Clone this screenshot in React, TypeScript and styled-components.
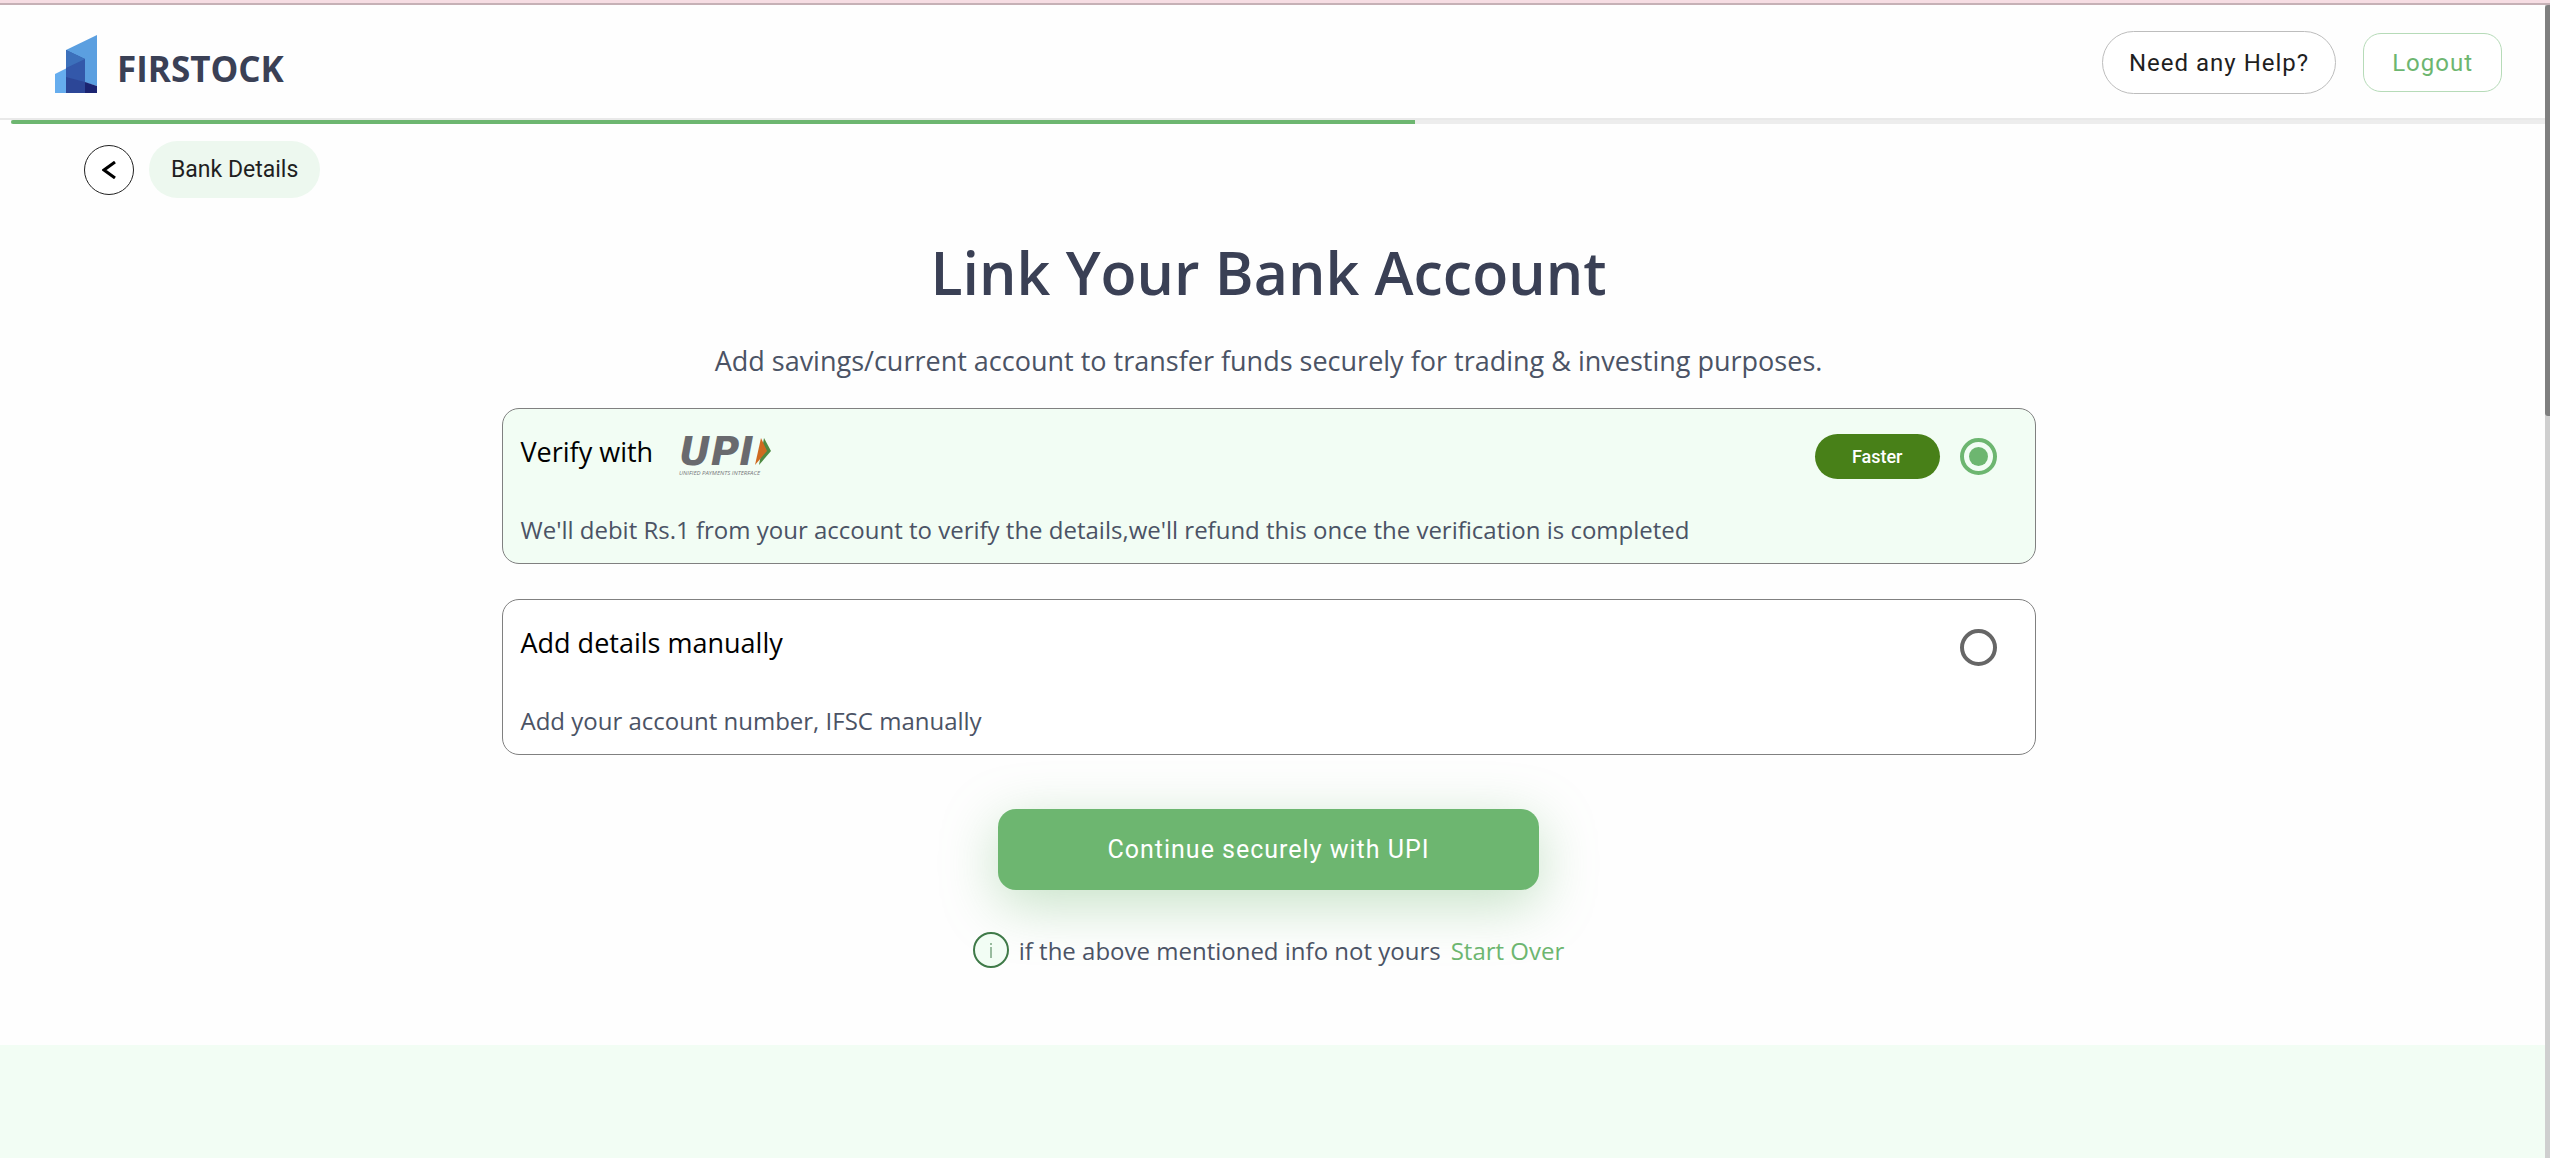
import React, { useState } from "react";
import styled, { createGlobalStyle } from "styled-components";

const GlobalStyle = createGlobalStyle`
  *, *::before, *::after { box-sizing: border-box; }
  body {
    margin: 0;
    background: #fefefe;
    color: #4b5365;
    font-family: "Open Sans", "Noto Sans", sans-serif;
  }
  h1, p { margin: 0; }
  button, input { font: inherit; margin: 0; }
`;

const Page = styled.div`
  display: flex;
  flex-direction: column;
  min-height: 100vh;
`;

const WindowEdge = styled.div`
  height: 5px;
  background: #f6dde3;
  border-bottom: 2px solid #c6b1b6;
`;

const Viewport = styled.div`
  display: flex;
  flex: 1;
`;

const Content = styled.div`
  display: flex;
  flex: 1;
  flex-direction: column;
`;

const ScrollTrack = styled.div`
  width: 5px;
  background: #cfcfcf;
`;

const ScrollThumb = styled.div`
  height: 411px;
  border-radius: 3px 0 0 3px;
  background: #7f7f7f;
`;

const Header = styled.header`
  display: flex;
  align-items: flex-start;
  justify-content: space-between;
  height: 115px;
  padding: 26px 43px 0 55px;
  border-bottom: 2px solid #e9e9e9;
`;

const Brand = styled.div`
  display: flex;
  align-items: flex-start;
  gap: 19px;
  padding-top: 4px;
`;

const BrandName = styled.span`
  padding-top: 5px;
  color: #3a4055;
  font-size: 35px;
  font-weight: 700;
  line-height: 58px;
`;

const HeaderActions = styled.div`
  display: flex;
  align-items: center;
  gap: 27px;
`;

const OutlineButton = styled.button<{ $accent?: boolean }>`
  height: ${(p) => (p.$accent ? "59px" : "63px")};
  padding: ${(p) => (p.$accent ? "0 28px" : "0 26px")};
  border: 1px solid ${(p) => (p.$accent ? "#b6dbb8" : "#bdbdbd")};
  border-radius: ${(p) => (p.$accent ? "18px" : "32px")};
  background: #fff;
  color: ${(p) => (p.$accent ? "#6db670" : "#1f1f1f")};
  font-family: Roboto, sans-serif;
  font-size: 24px;
  letter-spacing: 1px;
  cursor: pointer;
`;

const ProgressTrack = styled.div`
  height: 4px;
  margin-left: 11px;
  background: #ededed;
`;

const ProgressFill = styled.div`
  height: 100%;
  border-radius: 2px 0 0 2px;
  background: #6db670;
`;

const Breadcrumb = styled.nav`
  display: flex;
  align-items: center;
  gap: 15px;
  padding: 17px 84px 0;
`;

const BackButton = styled.button`
  display: grid;
  place-items: center;
  width: 50px;
  height: 50px;
  padding: 0;
  border: 1px solid #222;
  border-radius: 50%;
  background: #fff;
  cursor: pointer;
`;

const Crumb = styled.span`
  padding: 0 22px;
  border-radius: 29px;
  background: #edf8ef;
  color: #1f1f1f;
  font-family: Roboto, sans-serif;
  font-size: 23px;
  line-height: 57px;
`;

const Main = styled.main`
  display: flex;
  flex-direction: column;
  align-items: center;
  padding: 30px 8px 77px 0;
`;

const Title = styled.h1`
  color: #3a4055;
  font-size: 59px;
  font-weight: 600;
  line-height: 88px;
`;

const Subtitle = styled.p`
  margin-top: 23px;
  font-size: 27px;
  line-height: 44px;
`;

const Options = styled.form`
  display: flex;
  flex-direction: column;
  gap: 35px;
  width: 100%;
  max-width: 1534px;
  margin-top: 25px;
`;

const OptionCard = styled.label<{ $selected: boolean }>`
  display: flex;
  flex-direction: column;
  gap: 34px;
  min-height: 156px;
  padding: 26px 38px 16px 18px;
  border: 1px solid #808080;
  border-radius: 17px;
  background: ${(p) => (p.$selected ? "#f2fdf4" : "#fff")};
  cursor: pointer;
`;

const OptionHead = styled.span`
  display: flex;
  align-items: center;
  height: 42px;
`;

const OptionTitle = styled.span`
  display: flex;
  align-items: center;
  gap: 26px;
  margin-right: auto;
`;

const OptionName = styled.span`
  padding-bottom: 8px;
  color: #000;
  font-size: 27px;
  line-height: 36px;
`;

const OptionText = styled.span`
  padding-top: 2px;
  font-size: 24px;
  line-height: 34px;
`;

const Badge = styled.span`
  margin-right: 20px;
  padding: 0 37px;
  border-radius: 23px;
  background: #488018;
  color: #fff;
  font-family: Roboto, sans-serif;
  font-size: 18px;
  font-weight: 500;
  line-height: 45px;
`;

const Radio = styled.input`
  appearance: none;
  display: grid;
  place-items: center;
  width: 37px;
  height: 37px;
  border: 4px solid #666;
  border-radius: 50%;

  &:checked {
    border-color: #6db670;
  }

  &:checked::before {
    content: "";
    width: 19px;
    height: 19px;
    border-radius: 50%;
    background: #6db670;
  }
`;

const SubmitButton = styled.button`
  width: 541px;
  max-width: 100%;
  height: 81px;
  margin-top: 54px;
  border: 0;
  border-radius: 18px;
  background: #6db670;
  box-shadow: 0 14px 56px rgba(109, 182, 112, 0.4);
  color: #fff;
  font-family: Roboto, sans-serif;
  font-size: 25px;
  letter-spacing: 1px;
  cursor: pointer;
`;

const Note = styled.p`
  display: flex;
  align-items: center;
  gap: 10px;
  height: 36px;
  margin-top: 42px;
  font-size: 24px;
  line-height: 36px;
`;

const NoteText = styled.span`
  padding-top: 2px;
`;

const StartOver = styled.a`
  padding-top: 2px;
  color: #6db670;
  text-decoration: none;
`;

const Band = styled.footer`
  flex: 1;
  background: #f2fdf4;
`;

const LogoSvg = styled.svg`
  display: block;
  overflow: visible;
`;

const FirstockMark = () => (
  <LogoSvg width="43" height="58" viewBox="0 0 43 58" aria-hidden="true">
    <path d="M11 15 42 0V51L11 42Z" fill="#5b9fe0" />
    <path d="M0 39 30 24V58H0Z" fill="#66adee" />
    <path d="M11 15 30 24V58H11Z" fill="#3358aa" />
    <path d="M11 15 30 24 11 33Z" fill="#3c70bb" />
    <path d="M11 42 30 47V58H11Z" fill="#2c4697" />
    <path d="M30 47 42 51V58H30Z" fill="#1b2471" />
  </LogoSvg>
);

const UpiLogo = () => (
  <LogoSvg width="92" height="42" viewBox="0 0 92 42" role="img" aria-label="Unified Payments Interface">
    <text x="0" y="30" fill="#696a6e" fontFamily="DejaVu Sans, sans-serif" fontSize="39" fontWeight="700" fontStyle="italic">
      UPI
    </text>
    <path d="M85 3 92 16 80 30Z" fill="#4f8a42" />
    <path d="M82 3 88 16 76 30Z" fill="#cf6a20" />
    <text x="0" y="40" fill="#77787b" fontFamily="Open Sans, sans-serif" fontSize="6" fontStyle="italic">
      UNIFIED PAYMENTS INTERFACE
    </text>
  </LogoSvg>
);

const BackIcon = () => (
  <svg width="14" height="18" viewBox="0 0 14 18" fill="none" stroke="#000" strokeWidth="3" aria-hidden="true">
    <path d="M13 1 2 9 13 17" />
  </svg>
);

const InfoIcon = () => (
  <svg width="36" height="36" viewBox="0 0 36 36" fill="none" stroke="#3f7a48" aria-hidden="true">
    <circle cx="18" cy="18" r="17" fill="#f2fdf4" strokeWidth="2" />
    <path d="M18 15V26M18 11V13" strokeWidth="1" />
  </svg>
);

type Method = "upi" | "manual";

export default function App() {
  const [method, setMethod] = useState<Method>("upi");
  const progress = 55.4;

  return (
    <>
      <GlobalStyle />
      <Page>
        <WindowEdge />
        <Viewport>
          <Content>
            <Header>
              <Brand>
                <FirstockMark />
                <BrandName>FIRSTOCK</BrandName>
              </Brand>
              <HeaderActions>
                <OutlineButton type="button">Need any Help?</OutlineButton>
                <OutlineButton type="button" $accent>
                  Logout
                </OutlineButton>
              </HeaderActions>
            </Header>
            <ProgressTrack role="progressbar" aria-valuenow={progress} aria-label="Progress">
              <ProgressFill style={{ width: `${progress}%` }} />
            </ProgressTrack>
            <Breadcrumb>
              <BackButton type="button" aria-label="Back">
                <BackIcon />
              </BackButton>
              <Crumb>Bank Details</Crumb>
            </Breadcrumb>
            <Main>
              <Title>Link Your Bank Account</Title>
              <Subtitle>
                Add savings/current account to transfer funds securely for trading &amp; investing purposes.
              </Subtitle>
              <Options id="bank-link">
                <OptionCard $selected={method === "upi"}>
                  <OptionHead>
                    <OptionTitle>
                      <OptionName>Verify with</OptionName>
                      <UpiLogo />
                    </OptionTitle>
                    <Badge>Faster</Badge>
                    <Radio type="radio" name="method" checked={method === "upi"} onChange={() => setMethod("upi")} />
                  </OptionHead>
                  <OptionText>
                    We'll debit Rs.1 from your account to verify the details,we'll refund this once the verification is
                    completed
                  </OptionText>
                </OptionCard>
                <OptionCard $selected={method === "manual"}>
                  <OptionHead>
                    <OptionTitle>
                      <OptionName>Add details manually</OptionName>
                    </OptionTitle>
                    <Radio
                      type="radio"
                      name="method"
                      checked={method === "manual"}
                      onChange={() => setMethod("manual")}
                    />
                  </OptionHead>
                  <OptionText>Add your account number, IFSC manually</OptionText>
                </OptionCard>
              </Options>
              <SubmitButton type="submit" form="bank-link">
                Continue securely with UPI
              </SubmitButton>
              <Note>
                <InfoIcon />
                <NoteText>if the above mentioned info not yours</NoteText>
                <StartOver href="#">Start Over</StartOver>
              </Note>
            </Main>
            <Band />
          </Content>
          <ScrollTrack>
            <ScrollThumb />
          </ScrollTrack>
        </Viewport>
      </Page>
    </>
  );
}
